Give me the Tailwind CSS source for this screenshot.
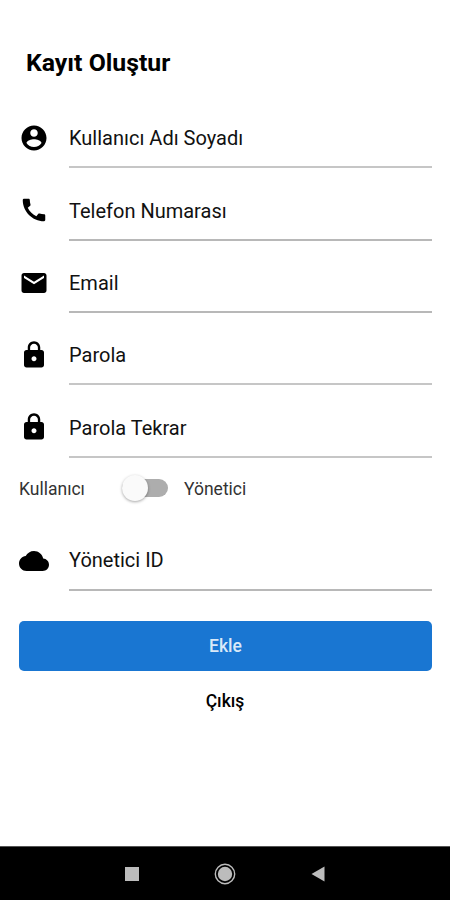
<!DOCTYPE html>
<html lang="tr">
<head>
<meta charset="utf-8">
<meta name="viewport" content="width=device-width, initial-scale=1">
<title>Kayıt Oluştur</title>
<script src="https://cdn.jsdelivr.net/npm/@tailwindcss/browser@4"></script>
</head>
<body class="h-[900px] w-[450px] overflow-hidden bg-white font-['Roboto',sans-serif] text-black">
<div class="flex h-full flex-col">
  <main class="flex grow flex-col pl-[19px] pr-[18px] pt-[47px]">
    <h1 class="ml-[7px] h-8 text-[24.800px] leading-8 font-bold"><span class="whitespace-nowrap">Kayıt Oluştur</span></h1>
    <form class="mt-[29.300px] flex flex-col">
      <div class="flex flex-col gap-[12.4px]">
        <div class="flex h-[60px] items-center">
          <svg class="mb-px size-[30px] shrink-0" viewBox="0 0 24 24"><path d="M12 2C6.480 2 2 6.480 2 12s4.480 10 10 10 10-4.480 10-10S17.520 2 12 2zm0 3c1.660 0 3 1.340 3 3s-1.340 3-3 3-3-1.340-3-3 1.340-3 3-3zm0 14.200c-2.500 0-4.710-1.280-6-3.220.03-1.990 4-3.080 6-3.080 1.990 0 5.970 1.090 6 3.080-1.290 1.940-3.500 3.220-6 3.220z"/></svg>
          <label class="ml-[20px] flex h-full grow items-center border-b-2 border-[#c6c6c6] pt-[2px] text-[20px] text-[#111]"><span>Kullanıcı Adı Soyadı</span></label>
        </div>
        <div class="flex h-[60px] items-center">
          <svg class="mb-px size-[30px] shrink-0" viewBox="0 0 24 24"><path d="M20.010 15.380c-1.230 0-2.420-.2-3.530-.56-.35-.12-.74-.03-1.010.24l-1.570 1.970c-2.830-1.350-5.480-3.900-6.890-6.830l1.950-1.660c.27-.28.35-.67.24-1.020-.37-1.110-.56-2.300-.56-3.530 0-.54-.45-.99-.99-.99H4.190C3.650 3 3 3.240 3 3.990 3 13.280 10.730 21 20.010 21c.71 0 .99-.63.99-1.180v-3.450c0-.54-.45-.99-.99-.99z"/></svg>
          <label class="ml-[20px] flex h-full grow items-center border-b-2 border-[#b8b8b8] pt-[2px] text-[20px] text-[#111]"><span>Telefon Numarası</span></label>
        </div>
        <div class="flex h-[60px] items-center">
          <svg class="mb-px size-[30px] shrink-0" viewBox="0 0 24 24"><path d="M20 4H4c-1.100 0-1.990.9-1.990 2L2 18c0 1.100.9 2 2 2h16c1.100 0 2-.9 2-2V6c0-1.100-.9-2-2-2zm0 4l-8 5-8-5V6l8 5 8-5v2z"/></svg>
          <label class="ml-[20px] flex h-full grow items-center border-b-2 border-[#b8b8b8] pt-[2px] text-[20px] text-[#111]"><span>Email</span></label>
        </div>
        <div class="flex h-[60px] items-center">
          <svg class="mb-px size-[30px] shrink-0" viewBox="0 0 24 24"><path d="M18 8h-1V6c0-2.760-2.240-5-5-5S7 3.240 7 6v2H6c-1.100 0-2 .9-2 2v10c0 1.100.9 2 2 2h12c1.100 0 2-.9 2-2V10c0-1.100-.9-2-2-2zm-6 9c-1.100 0-2-.9-2-2s.9-2 2-2 2 .9 2 2-.9 2-2 2zm3.100-9H8.900V6c0-1.710 1.390-3.100 3.100-3.100 1.710 0 3.100 1.390 3.100 3.100v2z"/></svg>
          <label class="ml-[20px] flex h-full grow items-center border-b-2 border-[#c6c6c6] pt-[2px] text-[20px] text-[#111]"><span>Parola</span></label>
        </div>
        <div class="flex h-[60px] items-center">
          <svg class="mb-px size-[30px] shrink-0" viewBox="0 0 24 24"><path d="M18 8h-1V6c0-2.760-2.240-5-5-5S7 3.240 7 6v2H6c-1.100 0-2 .9-2 2v10c0 1.100.9 2 2 2h12c1.100 0 2-.9 2-2V10c0-1.100-.9-2-2-2zm-6 9c-1.100 0-2-.9-2-2s.9-2 2-2 2 .9 2 2-.9 2-2 2zm3.100-9H8.900V6c0-1.710 1.390-3.100 3.100-3.100 1.710 0 3.100 1.390 3.100 3.100v2z"/></svg>
          <label class="ml-[20px] flex h-full grow items-center border-b-2 border-[#c6c6c6] pt-[2px] text-[20px] text-[#111]"><span>Parola Tekrar</span></label>
        </div>
      </div>
      <div class="mt-[14px] flex h-8 items-center text-[17.500px] text-[#333]">
        <span class="w-[103px] pt-[2px]">Kullanıcı</span>
        <span class="flex h-[18px] w-[46px] items-center rounded-full bg-[#adadad]"><span class="size-[26px] shrink-0 rounded-full bg-[#fafafa] shadow-[0_1px_3px_rgba(0,0,0,0.35)]"></span></span>
        <span class="ml-4 pt-[2px]">Yönetici</span>
      </div>
      <div class="mt-[26.700px] flex h-[60px] items-center">
        <svg class="size-[30px] shrink-0" viewBox="0 0 24 24"><path d="M19.350 10.040C18.670 6.590 15.640 4 12 4 9.110 4 6.600 5.640 5.350 8.040 2.340 8.360 0 10.910 0 14c0 3.310 2.690 6 6 6h13c2.760 0 5-2.240 5-5 0-2.640-2.050-4.780-4.650-4.960z"/></svg>
        <label class="ml-[20px] flex h-full grow items-center border-b-2 border-[#b8b8b8] text-[20px] text-[#111]"><span>Yönetici ID</span></label>
      </div>
      <button type="button" class="mt-[30px] h-[50px] rounded-[5px] bg-[#1976d2] pt-[2px] text-[17.500px] font-medium text-[#d9e9f8]">Ekle</button>
      <button type="button" class="mt-[14px] h-8 pt-[2px] pr-px text-[17.500px] font-medium">Çıkış</button>
    </form>
  </main>
  <nav class="flex h-[54px] shrink-0 items-center justify-center gap-[75px] border-t border-[#555] bg-black text-[#bcbcbc]">
    <svg class="h-[22px] w-[14px]" viewBox="0 0 14 22" fill="currentColor"><path d="M0 4h14v14H0z"/></svg>
    <svg class="size-[22px]" viewBox="0 0 22 22"><circle cx="11" cy="11" r="9.700" fill="none" stroke="currentColor" stroke-width="1.400"/><circle cx="11" cy="11" r="7.200" fill="currentColor"/></svg>
    <svg class="h-[22px] w-[14px]" viewBox="0 0 14 22" fill="currentColor"><path d="M0.500 11 13.500 3.500v15z"/></svg>
  </nav>
</div>
</body>
</html>
